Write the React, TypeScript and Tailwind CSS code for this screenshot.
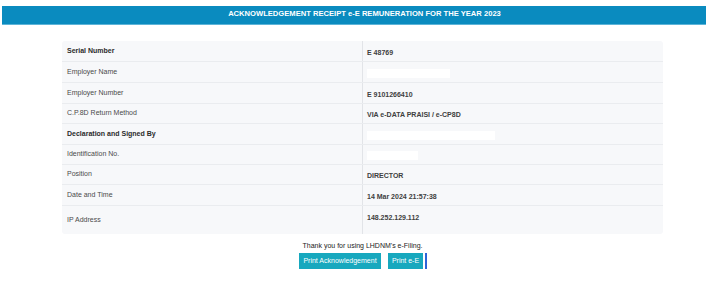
const rows: { label: string; value?: string; bold?: boolean; blank?: string; h: string }[] = [
  { label: "Serial Number", value: "E 48769", bold: true, h: "h-[21px]" },
  { label: "Employer Name", blank: "w-[83px]", h: "h-[21px]" },
  { label: "Employer Number", value: "E 9101266410", h: "h-[21px]" },
  { label: "C.P.8D Return Method", value: "VIA e-DATA PRAISI / e-CP8D", h: "h-[20px]" },
  { label: "Declaration and Signed By", bold: true, blank: "w-[128px]", h: "h-[21px]" },
  { label: "Identification No.", blank: "w-[51px]", h: "h-[20px]" },
  { label: "Position", value: "DIRECTOR", h: "h-[20px]" },
  { label: "Date and Time", value: "14 Mar 2024 21:57:38", h: "h-[21px]" },
];

export default function App() {
  return (
    <div className="w-[708px] h-[306px] bg-white font-['Liberation_Sans',Arial,sans-serif] overflow-hidden">
      {/* Kopfzeile */}
      <div className="pt-[6px] px-[2px]">
        <div className="h-[19px] bg-[#0a8bbf] border-b border-[#5db4d8] flex justify-center pl-[21px] pt-[3px]">
          <span className="text-[7.6px] leading-[9px] font-bold text-white">
            ACKNOWLEDGEMENT RECEIPT e-E REMUNERATION FOR THE YEAR 2023
          </span>
        </div>
      </div>

      {/* Tabelle */}
      <div className="ml-[62px] w-[601px] mt-[16px]">
        <div className="bg-[#f7f8fa] rounded-[3px]">
          {rows.map((r) => (
            <div key={r.label} className={`flex border-b border-[#eaecef] ${r.h}`}>
              <div
                className={`w-[301px] shrink-0 border-r border-[#e2e4e8] pl-[5px] flex items-center pb-[2px] text-[7px] leading-[9px] ${
                  r.bold ? "font-bold text-[#2b2b2b]" : "text-[#4a4a4a]"
                }`}
              >
                {r.label}
              </div>
              <div className="flex-1 pl-[4px] flex items-center pt-[2px]">
                {r.blank ? (
                  <div className={`h-[9px] bg-white ${r.blank}`} />
                ) : (
                  <span className="text-[7px] leading-[9px] font-bold text-[#404040]">{r.value}</span>
                )}
              </div>
            </div>
          ))}
          <div className="flex h-[28px]">
            <div className="w-[301px] shrink-0 border-r border-[#e2e4e8] pl-[5px] pt-[9px] text-[7px] leading-[9px] text-[#4a4a4a]">
              IP Address
            </div>
            <div className="flex-1 pl-[4px] pt-[7px] text-[7px] leading-[9px] font-bold text-[#404040]">
              148.252.129.112
            </div>
          </div>
        </div>

        {/* Fusszeile */}
        <p className="mt-[7px] text-center text-[7px] leading-[9px] text-[#222]">
          Thank you for using LHDNM's e-Filing.
        </p>
        <div className="mt-[3px] flex justify-center items-stretch pl-[1px]">
          <button className="h-[16px] w-[82px] bg-[#17a8be] text-white text-[7px] leading-[16px] text-center">
            Print Acknowledgement
          </button>
          <button className="ml-[7px] h-[16px] w-[35px] bg-[#17a8be] text-white text-[7px] leading-[16px] text-center">
            Print e-E
          </button>
          <div className="ml-[2px] w-[2px] h-[16px] bg-[#2d63d8]" />
        </div>
      </div>
    </div>
  );
}
